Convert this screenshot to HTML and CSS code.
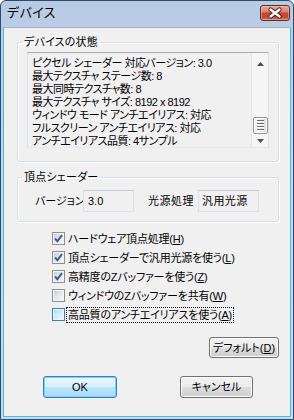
FILE: index.html
```html
<!DOCTYPE html>
<html lang="ja">
<head>
<meta charset="utf-8">
<title>デバイス</title>
<link rel="stylesheet" href="styles.css">
</head>
<body>
<div class="window">
  <div class="titlebar">
    <span class="title">デバイス</span>
    <span class="close">
      <svg width="28" height="14" viewBox="0 0 28 14">
        <path d="M9.5 3.5 L18.5 10.5 M18.5 3.5 L9.5 10.5" stroke="#4a1a14" stroke-width="4.2" stroke-linecap="round"/>
        <path d="M9.5 3.5 L18.5 10.5 M18.5 3.5 L9.5 10.5" stroke="#ffffff" stroke-width="2.4" stroke-linecap="round"/>
      </svg>
    </span>
  </div>
  <div class="client">
    <fieldset class="group status">
      <legend>デバイスの状態</legend>
      <div class="listbox">
        <div class="lines">
          <div>ピクセル シェーダー 対応バージョン: 3.0</div>
          <div>最大テクスチャ ステージ数: 8</div>
          <div>最大同時テクスチャ数: 8</div>
          <div>最大テクスチャ サイズ: 8192 x 8192</div>
          <div>ウィンドウ モード アンチエイリアス: 対応</div>
          <div>フルスクリーン アンチエイリアス: 対応</div>
          <div>アンチエイリアス品質: 4サンプル</div>
        </div>
        <div class="sb">
          <div class="sb-up"><svg width="7" height="4" viewBox="0 0 7 4"><path d="M0 4 L3.5 0 L7 4 Z" fill="#505050"/></svg></div>
          <div class="sb-gap"></div>
          <div class="thumb"><i></i><i></i><i></i><i></i></div>
          <div class="sb-down"><svg width="7" height="4" viewBox="0 0 7 4"><path d="M0 0 L7 0 L3.5 4 Z" fill="#505050"/></svg></div>
        </div>
      </div>
    </fieldset>
    <fieldset class="group vs">
      <legend>頂点シェーダー</legend>
      <div class="vsrow">
        <span class="lbl lbl-ver">バージョン</span>
        <span class="field f-ver">3.0</span>
        <span class="lbl lbl-light">光源処理</span>
        <span class="field f-light">汎用光源</span>
      </div>
    </fieldset>
    <div class="checks">
      <div class="row"><span class="cb"><svg width="11" height="11" viewBox="0 0 11 11"><path d="M2 5.5 L4.4 8.2 L9 2.2" fill="none" stroke="#3f5a93" stroke-width="1.9"/></svg></span><span class="txt">ハードウェア頂点処理(<u>H</u>)</span></div>
      <div class="row"><span class="cb"><svg width="11" height="11" viewBox="0 0 11 11"><path d="M2 5.5 L4.4 8.2 L9 2.2" fill="none" stroke="#3f5a93" stroke-width="1.9"/></svg></span><span class="txt">頂点シェーダーで汎用光源を使う(<u>L</u>)</span></div>
      <div class="row"><span class="cb"><svg width="11" height="11" viewBox="0 0 11 11"><path d="M2 5.5 L4.4 8.2 L9 2.2" fill="none" stroke="#3f5a93" stroke-width="1.9"/></svg></span><span class="txt">高精度のZバッファーを使う(<u>Z</u>)</span></div>
      <div class="row"><span class="cb"></span><span class="txt">ウィンドウのZバッファーを共有(<u>W</u>)</span></div>
      <div class="row"><span class="cb hot"></span><span class="txt focus">高品質のアンチエイリアスを使う(<u>A</u>)</span></div>
    </div>
    <div class="defrow"><span class="btn btn-def">デフォルト(<u>D</u>)</span></div>
    <div class="okrow">
      <span class="btn btn-ok primary">OK</span>
      <span class="btn btn-cancel">キャンセル</span>
    </div>
  </div>
</div>
</body>
</html>
```
FILE: styles.css
```css
* { box-sizing: border-box; }
html, body { margin: 0; padding: 0; background: #ffffff; }
body {
  font-family: "Liberation Sans", "Noto Sans CJK JP", sans-serif;
  font-size: 11px;
  font-feature-settings: "palt";
  color: #000;
}
.window {
  width: 294px;
  height: 420px;
  border: 1px solid #34486a;
  border-radius: 6px 6px 0 0;
  background: linear-gradient(180deg, #b8cbe4 0%, #c5d5ea 40%, #cbd9ec 100%);
  padding: 0 2px 2px;
  display: flex;
  flex-direction: column;
}
.titlebar {
  height: 26px;
  display: flex;
  align-items: flex-start;
  justify-content: space-between;
  padding: 0 1px 0 4px;
}
.title {
  font-size: 13px;
  line-height: 24px;
  letter-spacing: 0.4px;
  color: #000;
}
.close {
  margin-top: 4px;
  width: 30px;
  height: 16px;
  border: 1px solid #5a2a24;
  border-radius: 3px;
  background: linear-gradient(180deg, #e9a99a 0%, #d9826f 42%, #c4492f 50%, #c2472f 78%, #d9745a 100%);
  box-shadow: inset 0 0 0 1px rgba(255, 210, 200, 0.45);
  display: flex;
  align-items: center;
  justify-content: center;
}
.close svg { display: block; }
.client {
  flex: 1;
  background: #f0f0f0;
  border: 1px solid #34c4ef;
  border-top-color: #9fb4cf;
  display: flex;
  flex-direction: column;
}
.group {
  margin: 7px 11px 0 13px;
  border: 1px solid #d5dfe5;
  border-radius: 3px;
  padding: 3px 9px 13px;
  box-shadow: inset 1px 1px 0 #ffffff, 1px 1px 0 #ffffff;
  min-width: 0;
}
.group legend {
  margin-left: -5px;
  padding: 0 2px;
  line-height: 14px;
  height: 14px;
  letter-spacing: 0.2px;
}
.vs { margin-top: 8px; padding: 6px 9px 9px; }
.listbox {
  height: 96px;
  border: 1px solid #dbdfe6;
  border-top-color: #abadb3;
  border-bottom-color: #e3e9ef;
  background: #f0f0f0;
  display: flex;
}
.lines {
  flex: 1;
  padding: 4px 0 0 4px;
  line-height: 13px;
  letter-spacing: -0.5px;
  white-space: nowrap;
  overflow: hidden;
}
.sb {
  width: 17px;
  display: flex;
  flex-direction: column;
  align-items: center;
  background: #f5f5f5;
  border-left: 1px solid #e6e6e6;
}
.sb svg { display: block; }
.sb-up { height: 20px; display: flex; align-items: center; justify-content: center; padding-top: 2px; }
.sb-gap { height: 44px; }
.thumb {
  width: 15px;
  height: 17px;
  border: 1px solid #979797;
  border-radius: 2px;
  background: linear-gradient(90deg, #f4f4f4 0%, #ececec 50%, #dcdcdc 100%);
  box-shadow: inset 0 0 0 1px #fbfbfb;
  display: flex;
  flex-direction: column;
  align-items: center;
  justify-content: center;
  gap: 1px;
}
.thumb i {
  display: block;
  width: 7px;
  height: 1px;
  background: #6b6b6b;
  box-shadow: 0 1px 0 #ffffff;
  margin-bottom: 1px;
}
.sb-down { flex: 1; display: flex; align-items: center; justify-content: center; padding-top: 1px; }
.vsrow {
  display: flex;
  align-items: center;
  padding-left: 8px;
}
.lbl { line-height: 14px; white-space: nowrap; flex: none; }
.lbl-ver { width: 48px; }
.lbl-light { width: 50px; margin-left: 14px; letter-spacing: 0.5px; }
.field {
  height: 22px;
  flex: none;
  border: 1px solid #dcdfe4;
  border-top-color: #c9ccd2;
  background: #f0f0f0;
  line-height: 20px;
  padding-left: 4px;
  white-space: nowrap;
}
.f-ver { width: 51px; }
.f-light { width: 61px; padding-left: 3px; letter-spacing: 0.4px; }
.checks {
  margin: 7px 0 0 48px;
  display: flex;
  flex-direction: column;
}
.row {
  height: 19px;
  display: flex;
  align-items: center;
}
.cb {
  width: 13px;
  height: 13px;
  border: 1px solid #8e8f8f;
  padding: 1px;
  background: linear-gradient(135deg, #cbcfd5 0%, #e4e6e9 50%, #f8f8f8 100%) content-box, #f4f4f4;
  display: flex;
  align-items: center;
  justify-content: center;
  flex: none;
}
.cb svg { display: block; margin: -1px; }
.cb.hot {
  border-color: #3c7fb1;
  background: linear-gradient(135deg, #b7dff6 0%, #d2ecfa 50%, #eaf6fd 100%) content-box, #e8f5fc;
}
.txt {
  margin-left: 1px;
  padding: 0 1px;
  border: 1px dotted transparent;
  line-height: 14px;
  letter-spacing: -0.2px;
  white-space: nowrap;
}
.txt.focus { border-color: #000; }
u { text-decoration: underline; text-underline-offset: 1px; }
.defrow {
  margin-top: 13px;
  display: flex;
  justify-content: flex-end;
  padding-right: 11px;
}
.btn {
  height: 21px;
  border: 1px solid #707070;
  border-radius: 3px;
  background: linear-gradient(180deg, #f2f2f2 0%, #ebebeb 50%, #dddddd 50%, #cfcfcf 100%);
  box-shadow: inset 0 0 0 1px #fcfcfc;
  display: flex;
  align-items: center;
  justify-content: center;
  line-height: 14px;
  white-space: nowrap;
}
.btn-def { width: 70px; }
.okrow {
  margin-top: 18px;
  display: flex;
  padding-left: 39px;
}
.btn-ok { width: 74px; height: 22px; }
.btn-cancel { width: 73px; height: 22px; margin-left: 63px; }
.btn.primary {
  border-color: #3c7fb1;
  background: linear-gradient(180deg, #eaf6fd 0%, #d9f0fc 50%, #bee6fd 50%, #a7d9f5 100%);
  box-shadow: inset 0 0 0 1px #6fd6fb;
}
```
